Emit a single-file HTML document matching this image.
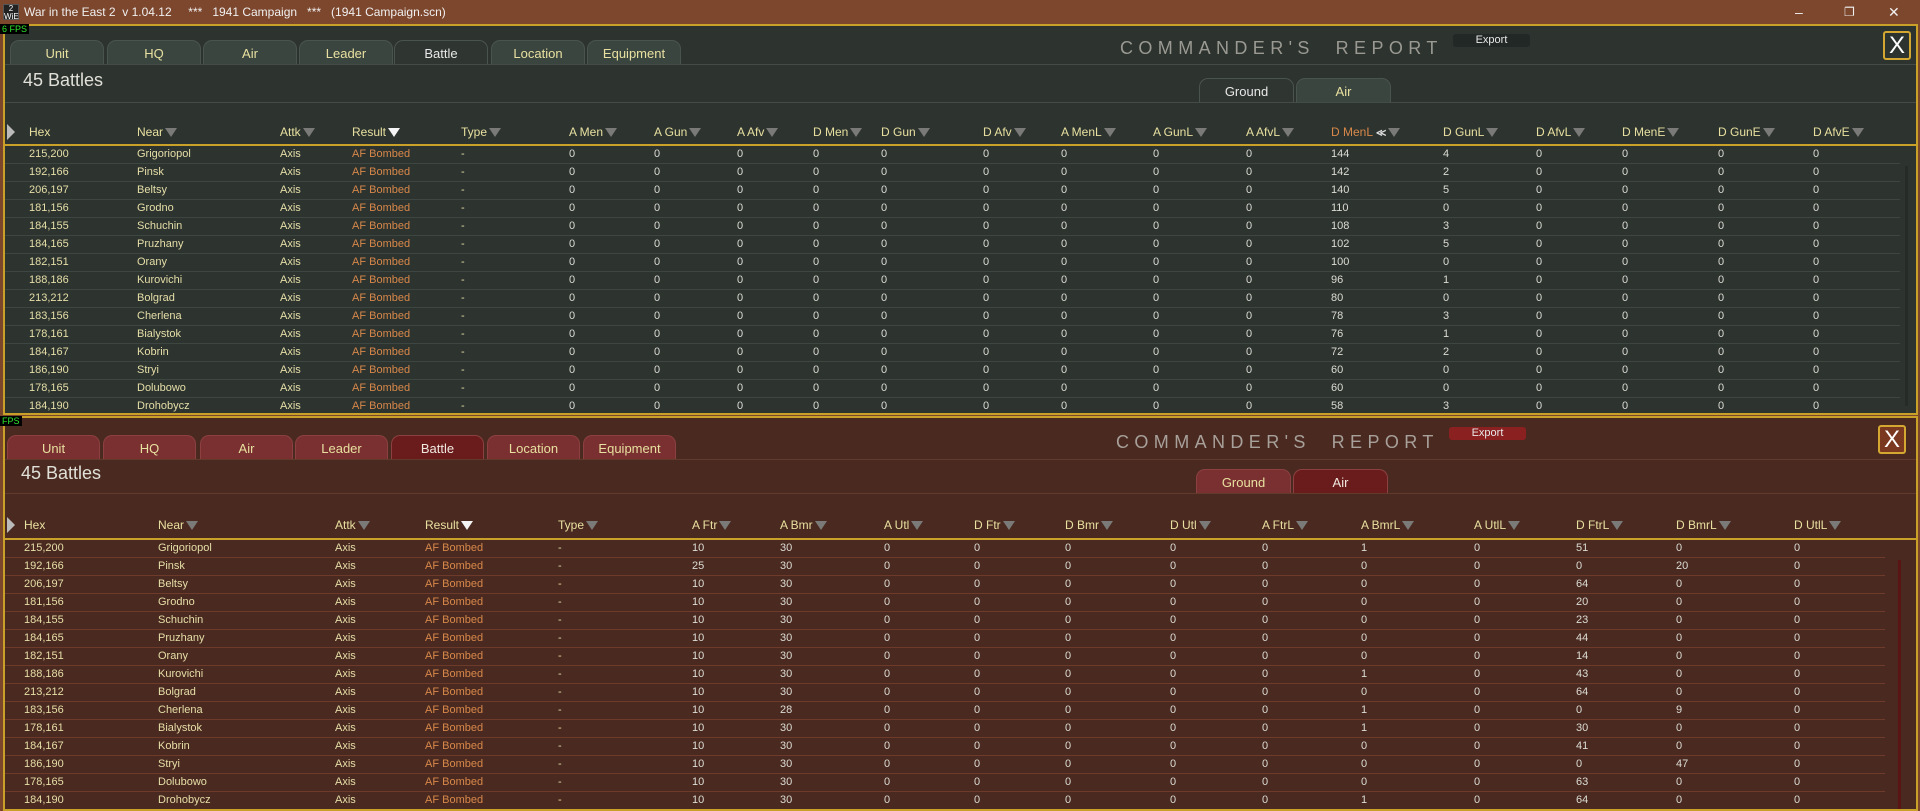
<!DOCTYPE html>
<html><head><meta charset="utf-8"><style>
*{margin:0;padding:0;box-sizing:border-box}
body{width:1920px;height:811px;overflow:hidden;background:#7a462c;font-family:"Liberation Sans Narrow","Liberation Sans",sans-serif;position:relative}
.abs{position:absolute}
#title{left:0;top:0;width:1920px;height:24px;background:#7d472d;color:#f0f0f0;font-family:"Liberation Sans",sans-serif;font-size:12px;line-height:24px}
.panel{position:absolute;left:3px;width:1915px;border:2px solid #c9a028;overflow:hidden}
.g{background:#2d332f}
.r{background:#4a2a20}
.tab{position:absolute;height:24px;border-radius:9px 9px 0 0;text-align:center;font-size:13px;line-height:26px;color:#e8e0a0}
.g .tab{background:#3b4540;border:1px solid #4a544e;border-bottom:none}
.g .tab.act{background:#2f3531;color:#e8e8e8}
.r .tab{background:#7a2f30;border:1px solid #8c4040;border-bottom:none}
.r .tab.act{background:#6a1c1c;color:#f0e8e0}
.hl{position:absolute;left:0;width:100%;height:1px}
.g .hl{background:#444c46}
.r .hl{background:#613a2c}
.cr{position:absolute;font-family:"Liberation Sans",sans-serif;font-size:18px;letter-spacing:5.4px;color:#9a9a92;white-space:nowrap}
.r .cr{color:#a8a09a}
.exp{position:absolute;width:77px;height:13px;border-radius:3px;font-size:11px;color:#e8e8e8;text-align:center;line-height:12px}
.g .exp{background:#222826}
.r .exp{background:#8a2020}
.cls{position:absolute;width:28px;height:29px;border:2px solid #d4a830;border-radius:3px;color:#fff;font-size:24px;text-align:center;line-height:25px;font-family:"Liberation Sans",sans-serif;font-weight:100}
.g .cls{background:#2d332f}
.r .cls{background:#7a3820}
.bt{position:absolute;font-size:18px;color:#e0e0d8;font-family:"Liberation Sans",sans-serif}
.hd{position:absolute;font-size:12px;color:#e8e0a0;line-height:16px;white-space:nowrap}
.hd i{display:inline-block;width:0;height:0;border-left:6px solid transparent;border-right:6px solid transparent;border-top:9px solid #7a7a78;margin-left:2px;vertical-align:-1px}
.hd.w i{border-top-color:#f4f4f4}
.row{position:absolute;left:0;width:1895px;height:18px;border-bottom:1px solid #3e4641;font-size:11px;line-height:17px}
.r .row{border-bottom-color:#6e3a2a;width:1880px}
.row span{position:absolute;white-space:nowrap;color:#dcdcd4}
.row span.y{color:#e6dfa8}
.row span.o{color:#d8884a}
.yl{position:absolute;left:0;width:100%;height:2px;background:#c9a028}
.arr{position:absolute;width:0;height:0;border-top:8px solid transparent;border-bottom:8px solid transparent;border-left:8px solid #bbb}
</style></head><body>
<div id="title" class="abs"><span style="position:absolute;left:3px;top:4px;width:16px;height:16px;background:#222;border:1px solid #555;font-size:8px;line-height:8px;color:#fff;text-align:center">2<br>WiE</span><span style="position:absolute;left:24px">War in the East 2&nbsp; v 1.04.12&nbsp;&nbsp;&nbsp;&nbsp; ***&nbsp;&nbsp; 1941 Campaign&nbsp;&nbsp; ***&nbsp;&nbsp; (1941 Campaign.scn)</span>
<span style="position:absolute;left:1795px;font-size:14px">–</span><span style="position:absolute;left:1844px;font-size:12px">❐</span><span style="position:absolute;left:1888px;font-size:14px">✕</span></div>

<div id="p1" class="panel g" style="top:24px;height:391px"></div>
<div id="p2" class="panel r" style="top:416px;height:395px"></div>
<div class="abs" style="left:0;top:24px;background:#000;color:#2ee82e;font-size:9px;padding:0 2px;line-height:10px">6 FPS</div>
<div class="abs" style="left:0;top:416px;background:#000;color:#2ee82e;font-size:9px;padding:0 2px;line-height:10px">FPS</div>

<script>
var tabs=["Unit","HQ","Air","Leader","Battle","Location","Equipment"];
var hex=["215,200","192,166","206,197","181,156","184,155","184,165","182,151","188,186","213,212","183,156","178,161","184,167","186,190","178,165","184,190"];
var near=["Grigoriopol","Pinsk","Beltsy","Grodno","Schuchin","Pruzhany","Orany","Kurovichi","Bolgrad","Cherlena","Bialystok","Kobrin","Stryi","Dolubowo","Drohobycz"];
function build(id,o){
 var p=document.getElementById(id),h="";
 o.tx.forEach(function(x,i){h+='<div class="tab'+(i==4?' act':'')+'" style="left:'+x+'px;top:'+o.tt+'px;width:'+o.tw+'px">'+tabs[i]+'</div>';});
 h+='<div class="hl" style="top:'+(o.tt+24)+'px"></div>';
 h+='<div class="cr" style="left:'+o.crx+'px;top:'+o.cry+'px">COMMANDER\'S&nbsp; REPORT</div>';
 h+='<div class="exp" style="left:'+o.ex+'px;top:'+o.ey+'px">Export</div>';
 h+='<div class="cls" style="left:'+o.cx+'px;top:'+o.cy+'px">X</div>';
 h+='<div class="bt" style="left:'+o.bx+'px;top:'+o.by+'px">45 Battles</div>';
 h+='<div class="hl" style="top:'+(o.gy+24)+'px"></div>';
 h+='<div class="tab" style="left:'+o.gx+'px;top:'+o.gy+'px;width:95px;'+(o.red?'background:#7a3030':'background:#2f3531;color:#e8e8e8')+'">Ground</div>';
 h+='<div class="tab" style="left:'+(o.gx+97)+'px;top:'+o.gy+'px;width:95px;'+(o.red?'background:#6a1c1c;color:#f0e8e0':'background:#3b4540')+'">Air</div>';
 h+='<div class="arr" style="left:2px;top:'+(o.hy)+'px"></div>';
 o.cols.forEach(function(c){h+='<div class="hd'+(c[0]=="Result"?' w':'')+'" style="left:'+(c[1]-2)+'px;top:'+o.hy+'px;'+(c[0]=="D MenL"?'color:#d8884a':'')+'">'+c[0]+(c[0]=="Hex"?'':(c[0]=="D MenL"?' <b style="color:#ddd;font-size:10px">&#8810;</b>':'')+'<i></i>')+'</div>';});
 h+='<div class="yl" style="top:'+o.ly+'px"></div>';
 for(var r=0;r<15;r++){
  var s='<div class="row" style="top:'+(o.ly+2+r*18)+'px">';
  o.cols.forEach(function(c,j){var v,cl='';
   if(j==0){v=hex[r];cl='y'}else if(j==1){v=near[r];cl='y'}else if(j==2){v='Axis';cl='y'}else if(j==3){v='AF Bombed';cl='o'}else if(j==4){v='-';cl='y'}else v=o.val(j,r);
   s+='<span class="'+cl+'" style="left:'+(c[1]-2)+'px">'+v+'</span>';});
  h+=s+'</div>';
 }
 if(o.red) h+='<div class="abs" style="left:1893px;top:'+(o.ly+22)+'px;width:3px;height:260px;background:#5a1414"></div>';
 else h+='<div class="abs" style="left:1900px;top:'+(o.ly+22)+'px;width:3px;height:240px;background:#262b28"></div>';
 p.innerHTML=h;
}
var c1=[["Hex",26],["Near",134],["Attk",277],["Result",349],["Type",458],["A Men",566],["A Gun",651],["A Afv",734],["D Men",810],["D Gun",878],["D Afv",980],["A MenL",1058],["A GunL",1150],["A AfvL",1243],["D MenL",1328],["D GunL",1440],["D AfvL",1533],["D MenE",1619],["D GunE",1715],["D AfvE",1810]];
var dm=[144,142,140,110,108,102,100,96,80,78,76,72,60,60,58],dg=[4,2,5,0,3,5,0,1,0,3,1,2,0,0,3];
build("p1",{tx:[5,102,198,294,389,486,582],tt:14,tw:94,crx:1115,cry:12,ex:1448,ey:8,cx:1878,cy:5,bx:18,by:44,gx:1194,gy:52,hy:98,ly:118,cols:c1,red:0,
 val:function(j,r){return j==14?dm[r]:(j==15?dg[r]:0)}});
var c2=[["Hex",21],["Near",155],["Attk",332],["Result",422],["Type",555],["A Ftr",689],["A Bmr",777],["A Utl",881],["D Ftr",971],["D Bmr",1062],["D Utl",1167],["A FtrL",1259],["A BmrL",1358],["A UtlL",1471],["D FtrL",1573],["D BmrL",1673],["D UtlL",1791]];
var af=[10,25,10,10,10,10,10,10,10,10,10,10,10,10,10],ab=[30,30,30,30,30,30,30,30,30,28,30,30,30,30,30],abl=[1,0,0,0,0,0,0,1,0,1,1,0,0,0,1],dfl=[51,0,64,20,23,44,14,43,64,0,30,41,0,63,64],dbl=[0,20,0,0,0,0,0,0,0,9,0,0,47,0,0];
build("p2",{tx:[2,98,195,290,386,482,578],tt:17,tw:93,crx:1111,cry:14,ex:1444,ey:9,cx:1873,cy:7,bx:16,by:45,gx:1191,gy:51,hy:99,ly:120,cols:c2,red:1,
 val:function(j,r){return j==5?af[r]:j==6?ab[r]:j==12?abl[r]:j==14?dfl[r]:j==15?dbl[r]:0}});
</script>
</body></html>
